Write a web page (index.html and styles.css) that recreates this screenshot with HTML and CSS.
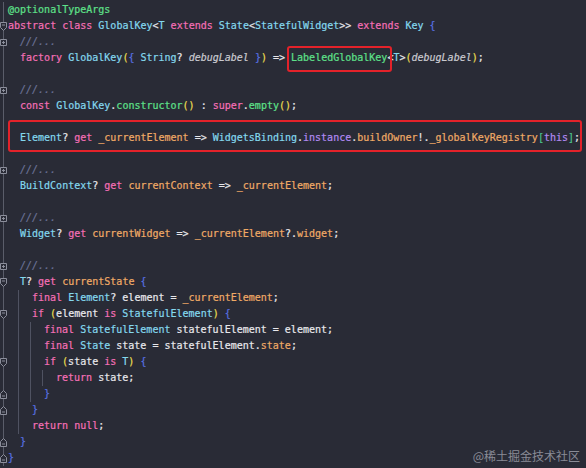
FILE: index.html
```html
<!DOCTYPE html>
<html lang="en">
<head>
    <meta charset="UTF-8">
    <meta name="viewport" content="width=device-width, initial-scale=1.0">
    <title>GlobalKey</title>
    <link rel="stylesheet" href="styles.css">
</head>
<body>
    <div class="editor">
        <div class="ln"><span class="gut"></span><span class="code"><span class="f">@optionalTypeArgs</span></span></div>
        <div class="ln"><span class="gut"><svg class="fold" width="8" height="9" viewBox="0 0 8 9"><path d="M0.5 0.5h6v5l-3 3l-3-3z"/><path d="M2 3h3"/></svg></span><span class="code"><span class="k">abstract class</span> <span class="t">GlobalKey</span>&lt;<span class="t">T</span> <span class="k">extends</span> <span class="t">State</span>&lt;<span class="t">StatefulWidget</span>&gt;&gt; <span class="k">extends</span> <span class="t">Key</span> <span class="b">{</span></span></div>
        <div class="ln"><span class="gut"><svg class="fold" width="8" height="9" viewBox="0 0 8 9"><path d="M0.5 1.5h6v6h-6z"/><path d="M2 4.5h3M3.5 3v3"/></svg></span><span class="code"><i class="i"></i><span class="c">///...</span></span></div>
        <div class="ln"><span class="gut"></span><span class="code"><i class="i"></i><span class="k">factory</span> <span class="t">GlobalKey</span><span class="y">(</span><span class="b">{</span> <span class="t">String</span>? <span class="a">debugLabel</span> <span class="b">}</span><span class="y">)</span> =&gt; <span class="f">LabeledGlobalKey</span>&lt;<span class="t">T</span>&gt;<span class="y">(</span><span class="a">debugLabel</span><span class="y">)</span>;</span></div>
        <div class="ln"><span class="gut"></span><span class="code"></span></div>
        <div class="ln"><span class="gut"><svg class="fold" width="8" height="9" viewBox="0 0 8 9"><path d="M0.5 1.5h6v6h-6z"/><path d="M2 4.5h3M3.5 3v3"/></svg></span><span class="code"><i class="i"></i><span class="c">///...</span></span></div>
        <div class="ln"><span class="gut"></span><span class="code"><i class="i"></i><span class="k">const</span> <span class="t">GlobalKey</span>.<span class="f">constructor</span><span class="y">()</span> : <span class="k">super</span>.<span class="f">empty</span><span class="y">()</span>;</span></div>
        <div class="ln"><span class="gut"></span><span class="code"></span></div>
        <div class="ln"><span class="gut"></span><span class="code"><i class="i"></i><span class="t">Element</span>? <span class="k">get</span> <span class="p">_currentElement</span> =&gt; <span class="t">WidgetsBinding</span>.<span class="v">instance</span>.<span class="p">buildOwner</span>!.<span class="p">_globalKeyRegistry</span><span class="s">[</span><span class="v">this</span><span class="s">]</span>;</span></div>
        <div class="ln"><span class="gut"></span><span class="code"></span></div>
        <div class="ln"><span class="gut"><svg class="fold" width="8" height="9" viewBox="0 0 8 9"><path d="M0.5 1.5h6v6h-6z"/><path d="M2 4.5h3M3.5 3v3"/></svg></span><span class="code"><i class="i"></i><span class="c">///...</span></span></div>
        <div class="ln"><span class="gut"></span><span class="code"><i class="i"></i><span class="t">BuildContext</span>? <span class="k">get</span> <span class="p">currentContext</span> =&gt; <span class="p">_currentElement</span>;</span></div>
        <div class="ln"><span class="gut"></span><span class="code"></span></div>
        <div class="ln"><span class="gut"><svg class="fold" width="8" height="9" viewBox="0 0 8 9"><path d="M0.5 1.5h6v6h-6z"/><path d="M2 4.5h3M3.5 3v3"/></svg></span><span class="code"><i class="i"></i><span class="c">///...</span></span></div>
        <div class="ln"><span class="gut"></span><span class="code"><i class="i"></i><span class="t">Widget</span>? <span class="k">get</span> <span class="p">currentWidget</span> =&gt; <span class="p">_currentElement</span>?.<span class="p">widget</span>;</span></div>
        <div class="ln"><span class="gut"></span><span class="code"></span></div>
        <div class="ln"><span class="gut"><svg class="fold" width="8" height="9" viewBox="0 0 8 9"><path d="M0.5 1.5h6v6h-6z"/><path d="M2 4.5h3M3.5 3v3"/></svg></span><span class="code"><i class="i"></i><span class="c">///...</span></span></div>
        <div class="ln"><span class="gut"><svg class="fold" width="8" height="9" viewBox="0 0 8 9"><path d="M0.5 0.5h6v5l-3 3l-3-3z"/><path d="M2 3h3"/></svg></span><span class="code"><i class="i"></i><span class="t">T</span>? <span class="k">get</span> <span class="p">currentState</span> <span class="b">{</span></span></div>
        <div class="ln"><span class="gut"></span><span class="code"><i class="i g"></i><i class="i"></i><span class="k">final</span> <span class="t">Element</span>? element = <span class="p">_currentElement</span>;</span></div>
        <div class="ln"><span class="gut"><svg class="fold" width="8" height="9" viewBox="0 0 8 9"><path d="M0.5 0.5h6v5l-3 3l-3-3z"/><path d="M2 3h3"/></svg></span><span class="code"><i class="i g"></i><i class="i"></i><span class="k">if</span> <span class="y">(</span>element <span class="k">is</span> <span class="t">StatefulElement</span><span class="y">)</span> <span class="b">{</span></span></div>
        <div class="ln"><span class="gut"></span><span class="code"><i class="i g"></i><i class="i g"></i><i class="i"></i><span class="k">final</span> <span class="t">StatefulElement</span> statefulElement = element;</span></div>
        <div class="ln"><span class="gut"></span><span class="code"><i class="i g"></i><i class="i g"></i><i class="i"></i><span class="k">final</span> <span class="t">State</span> state = statefulElement.<span class="p">state</span>;</span></div>
        <div class="ln"><span class="gut"><svg class="fold" width="8" height="9" viewBox="0 0 8 9"><path d="M0.5 0.5h6v5l-3 3l-3-3z"/><path d="M2 3h3"/></svg></span><span class="code"><i class="i g"></i><i class="i g"></i><i class="i"></i><span class="k">if</span> <span class="y">(</span>state <span class="k">is</span> <span class="t">T</span><span class="y">)</span> <span class="b">{</span></span></div>
        <div class="ln"><span class="gut"></span><span class="code"><i class="i g"></i><i class="i g"></i><i class="i g"></i><i class="i"></i><span class="k">return</span> state;</span></div>
        <div class="ln"><span class="gut"><svg class="fold" width="8" height="9" viewBox="0 0 8 9"><path d="M0.5 8.5h6v-5l-3-3l-3 3z"/><path d="M2 6h3"/></svg></span><span class="code"><i class="i g"></i><i class="i g"></i><i class="i"></i><span class="b">}</span></span></div>
        <div class="ln"><span class="gut"><svg class="fold" width="8" height="9" viewBox="0 0 8 9"><path d="M0.5 8.5h6v-5l-3-3l-3 3z"/><path d="M2 6h3"/></svg></span><span class="code"><i class="i g"></i><i class="i"></i><span class="b">}</span></span></div>
        <div class="ln"><span class="gut"></span><span class="code"><i class="i g"></i><i class="i"></i><span class="k">return null</span>;</span></div>
        <div class="ln"><span class="gut"><svg class="fold" width="8" height="9" viewBox="0 0 8 9"><path d="M0.5 8.5h6v-5l-3-3l-3 3z"/><path d="M2 6h3"/></svg></span><span class="code"><i class="i"></i><span class="b">}</span></span></div>
        <div class="ln"><span class="gut"><svg class="fold" width="8" height="9" viewBox="0 0 8 9"><path d="M0.5 8.5h6v-5l-3-3l-3 3z"/><path d="M2 6h3"/></svg></span><span class="code"><span class="b">}</span></span></div>

        <div class="mark mark-factory"></div>
        <div class="mark mark-element"></div>
        <div class="wm">@稀土掘金技术社区</div>
    </div>
</body>
</html>
```

FILE: styles.css
```css
body {
    margin: 0;
    background: #292b36;
    font-family: "DejaVu Sans Mono", "Liberation Mono", monospace;
    font-size: 10px;
    color: #e8e8ec;
}

.editor {
    position: relative;
    height: 468px;
    padding-top: 2px;
    box-sizing: border-box;
    overflow: hidden;
}

.ln {
    display: flex;
    height: 16px;
    line-height: 16px;
}

.gut {
    width: 8px;
    flex: none;
    display: flex;
    align-items: center;
    background: linear-gradient(#5a5d6a, #5a5d6a) 3px 0 / 1px 100% no-repeat;
}

.fold {
    display: block;
}

.fold path {
    fill: #292b36;
    stroke: #8c8f9c;
    stroke-width: 1;
}

.fold path + path {
    fill: none;
}

.code {
    white-space: pre;
    -webkit-text-stroke: 0.2px currentColor;
}

.i {
    display: inline-block;
    width: 12px;
    height: 16px;
    vertical-align: top;
}

.i.g {
    background: linear-gradient(#4f5261, #4f5261) 10px 0 / 1px 100% no-repeat;
}

/* syntax colours */
.k { color: #f56fb7; }
.t { color: #84d8ee; }
.f { color: #5ee08a; }
.p { color: #f0aa66; }
.v { color: #b28af2; }
.c { color: #6b7296; font-style: italic; }
.a { color: #cacad0; font-style: italic; }
.y { color: #ebde50; }
.b { color: #5870e0; }
.s { color: #4cc28c; }

.mark {
    position: absolute;
    border: 2px solid #e3222a;
    border-radius: 3px;
}

.mark-factory {
    left: 287px;
    top: 46px;
    width: 101px;
    height: 22px;
}

.mark-element {
    left: 8px;
    top: 120px;
    width: 570px;
    height: 28px;
}

.wm {
    position: absolute;
    right: 6px;
    bottom: 4px;
    font-family: "Noto Sans CJK SC", sans-serif;
    font-size: 12px;
    color: #8a8c96;
}
```
